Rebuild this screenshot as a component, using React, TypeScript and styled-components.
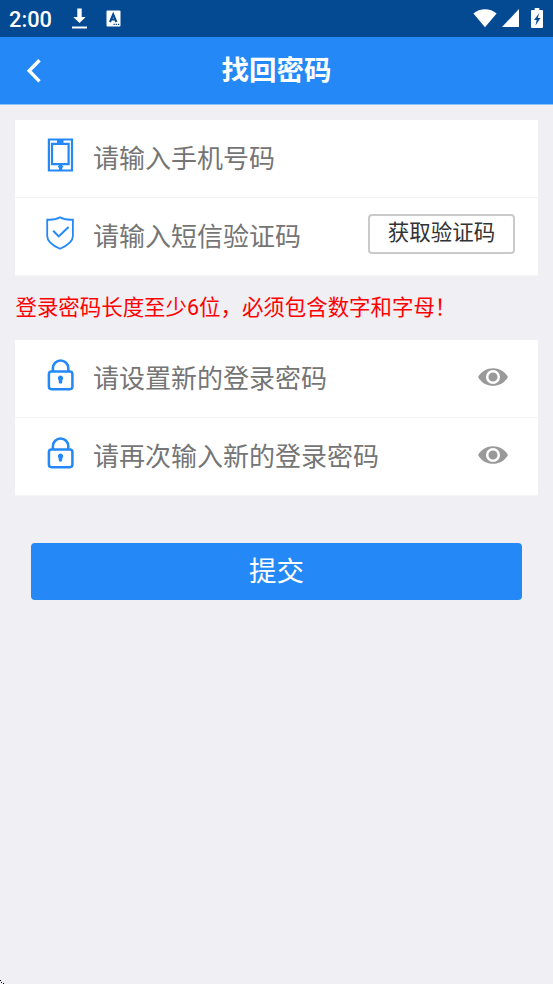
import React from 'react';
import styled, { createGlobalStyle } from 'styled-components';

const BLUE = '#2489f6';

const GlobalStyle = createGlobalStyle`
  body {
    margin: 0;
    background: #efeff4;
    font-family: Roboto, 'Noto Sans CJK SC', sans-serif;
  }
  * { box-sizing: border-box; }
  svg { display: block; flex: none; }
`;

const Screen = styled.div`
  position: relative;
  width: 100%;
  height: 984px;
  overflow: hidden;
  background: #efeff4;
`;

const StatusBar = styled.div`
  display: flex;
  align-items: center;
  height: 37px;
  padding: 0 8px 0 9px;
  background: #044a92;
  color: #fff;
`;

const Clock = styled.span`
  width: 62px;
  font-size: 21.8px;
  font-weight: 500;
  line-height: 37px;
  padding-top: 1px;
`;

const StatusIcons = styled.div<{ $end?: boolean }>`
  display: flex;
  align-items: center;
  padding-bottom: ${(p) => (p.$end ? '1px' : '0')};
  margin-left: ${(p) => (p.$end ? 'auto' : '0')};
`;

const Header = styled.header`
  display: grid;
  grid-template-columns: 60px 1fr 60px;
  align-items: center;
  height: 68px;
  background: ${BLUE};
  border-bottom: 1px solid #8dc1f9;
  color: #fff;
`;

const BackButton = styled.button`
  padding: 1px 0 0 26px;
  border: 0;
  background: none;
  color: inherit;
`;

const Title = styled.h1`
  margin: 0;
  font-size: 27.5px;
  font-weight: 700;
  line-height: 40px;
  text-align: center;
`;

const Card = styled.section`
  margin: 0 15px;
  background: #fff;
  border-bottom: 1px solid #f6f6f8;
`;

const Row = styled.div`
  display: flex;
  align-items: center;
  height: 77px;
  padding: 0 23px 0 30px;
  & + & {
    height: 78px;
    border-top: 1px solid #f4f4f5;
  }
`;

const FieldIcon = styled.span`
  width: 48px;
  color: ${BLUE};
  padding-bottom: 8px;
`;

const Placeholder = styled.span`
  flex: 1;
  font-size: 26px;
  line-height: 38px;
  color: #757575;
  white-space: nowrap;
`;

const CodeButton = styled.button`
  width: 147px;
  height: 40px;
  margin-bottom: 6px;
  padding: 0 0 1px;
  border: 2px solid #cacaca;
  border-radius: 4px;
  background: #fff;
  color: #333;
  font-family: inherit;
  font-size: 21.5px;
  line-height: 32px;
  white-space: nowrap;
`;

const EyeButton = styled.button`
  padding: 0 7px 4px 0;
  border: 0;
  background: none;
  color: #999;
`;

const Hint = styled.p`
  height: 64px;
  margin: 0;
  padding: 1px 15px 0 15.5px;
  color: #f00;
  font-size: 21.45px;
  line-height: 62px;
  white-space: nowrap;
`;

const Main = styled.main`
  padding-top: 15px;
`;

const SubmitButton = styled.button`
  display: block;
  width: calc(100% - 62px);
  height: 57px;
  margin: 47px 31px 0;
  padding: 0;
  border: 0;
  border-radius: 4px;
  background: ${BLUE};
  color: #fff;
  font-family: inherit;
  font-size: 27.5px;
  line-height: 52px;
`;

const CornerMark = styled.svg`
  position: absolute;
  left: 0;
  bottom: 0;
`;

const DownloadIcon = () => (
  <svg width="17" height="22" viewBox="0 0 17 22" fill="#fff">
    <path d="M6.3 .5h4.4v8.4h4L8.5 15.1 2.3 8.9h4zM1 18.5h15v2H1z" />
  </svg>
);

const InputMethodIcon = () => (
  <svg width="15" height="17" viewBox="0 0 15 17">
    <rect x="0.5" y="0.5" width="14" height="16" rx="1" fill="#fff" />
    <path d="M4 12 7.2 4.4 10.4 12M5.2 9.5h4" fill="none" stroke="#044a92" strokeWidth="2.1" />
    <path d="M7.5 13.7h1.3v1.3H7.5zM9.7 13.7H11v1.3H9.7zM11.9 13.7h1.3v1.3h-1.3z" fill="#044a92" />
  </svg>
);

const WifiIcon = () => (
  <svg width="24" height="20" viewBox="0 0 24 20" fill="#fff">
    <path d="M0.4 5.5C6.8-.2 17.2-.2 23.6 5.5L12 19.2z" />
  </svg>
);

const SignalIcon = () => (
  <svg width="17" height="18" viewBox="0 0 17 18" fill="#fff">
    <path d="M17 0v18H0z" />
  </svg>
);

const BatteryIcon = () => (
  <svg width="12" height="20" viewBox="0 0 12 20">
    <path d="M3.7 0h4.6v2H11q1 0 1 1v16q0 1-1 1H1q-1 0-1-1V3q0-1 1-1h2.7z" fill="#fff" />
    <path d="M8.3 5 3 12h2.7l-1.2 5.4L9.5 10H6.7z" fill="#044a92" />
  </svg>
);

const BackIcon = () => (
  <svg width="16" height="24" viewBox="0 0 16 24" fill="none" stroke="currentColor" strokeWidth="3.4">
    <path d="M13.5 1.2 3.2 11.8 13.5 22.4" />
  </svg>
);

const PhoneIcon = () => (
  <svg width="30" height="34" viewBox="0 0 30 34" fill="none" stroke="currentColor">
    <path d="M3.9 1.5h23.1v31H3.9z" strokeWidth="2.2" />
    <path d="M7 5.8h16.6v20.4H7z" strokeWidth="2.2" />
    <path d="M12 2h6.5v3.5H12zM14 26.5h3.2v1.2h1v1.8h-1V32H14v-2.5h-1v-1.8h1z" fill="currentColor" stroke="none" />
  </svg>
);

const ShieldIcon = () => (
  <svg width="30" height="34" viewBox="0 0 30 34" fill="none" stroke="currentColor" strokeWidth="1.8">
    <path d="M15 1.3C11.2 3.6 7 4 2.2 3.7V20c0 6.5 6.5 10 12.8 12.8C21.3 30 27.9 26.5 27.9 20V3.7C23 4 18.8 3.6 15 1.3z" />
    <path d="m8.2 14.8 5.5 5.6L23.6 11" strokeWidth="2.1" />
  </svg>
);

const LockIcon = () => (
  <svg width="30" height="34" viewBox="0 0 30 34" fill="none" stroke="currentColor" strokeWidth="2.5">
    <rect x="3.9" y="13.6" width="23.5" height="17.6" rx="2.6" />
    <path d="M7.9 13.5V10.2a7.7 7.7 0 0 1 15.4 0v3.3" />
    <path d="M15.5 17.5a2.7 2.7 0 0 1 1.8 4.7V24a1.8 1.8 0 0 1-3.6 0v-1.8a2.7 2.7 0 0 1 1.8-4.7z" fill="currentColor" stroke="none" />
  </svg>
);

const EyeIcon = () => (
  <svg width="30" height="18" viewBox="0 0 30 18">
    <path d="M0 9C6.5-2.8 23.5-2.8 30 9 23.5 20.8 6.5 20.8 0 9z" fill="currentColor" />
    <circle cx="15" cy="9" r="5.8" fill="none" stroke="#fff" strokeWidth="2.5" />
  </svg>
);

const PasswordRow = ({ label }: { label: string }) => (
  <Row>
    <FieldIcon><LockIcon /></FieldIcon>
    <Placeholder>{label}</Placeholder>
    <EyeButton aria-label="显示密码"><EyeIcon /></EyeButton>
  </Row>
);

const Gap = styled.span<{ $w: number }>`
  width: ${(p) => p.$w}px;
`;

export default function App() {
  return (
    <Screen>
      <GlobalStyle />
      <StatusBar>
        <Clock>2:00</Clock>
        <StatusIcons>
          <DownloadIcon />
          <Gap $w={17.5} />
          <InputMethodIcon />
        </StatusIcons>
        <StatusIcons $end>
          <WifiIcon />
          <Gap $w={5} />
          <SignalIcon />
          <Gap $w={12} />
          <BatteryIcon />
          <Gap $w={2} />
        </StatusIcons>
      </StatusBar>
      <Header>
        <BackButton aria-label="返回"><BackIcon /></BackButton>
        <Title>找回密码</Title>
      </Header>
      <Main>
        <Card>
          <Row>
            <FieldIcon><PhoneIcon /></FieldIcon>
            <Placeholder>请输入手机号码</Placeholder>
          </Row>
          <Row>
            <FieldIcon><ShieldIcon /></FieldIcon>
            <Placeholder>请输入短信验证码</Placeholder>
            <CodeButton>获取验证码</CodeButton>
          </Row>
        </Card>
        <Hint>登录密码长度至少6位，必须包含数字和字母！</Hint>
        <Card>
          <PasswordRow label="请设置新的登录密码" />
          <PasswordRow label="请再次输入新的登录密码" />
        </Card>
        <SubmitButton>提交</SubmitButton>
      </Main>
      <CornerMark width="4" height="4" viewBox="0 0 4 4">
        <path d="M0 0h1v1H0zM1 2h1v1H1zM3 3h1v1H3z" fill="#000" />
      </CornerMark>
    </Screen>
  );
}
